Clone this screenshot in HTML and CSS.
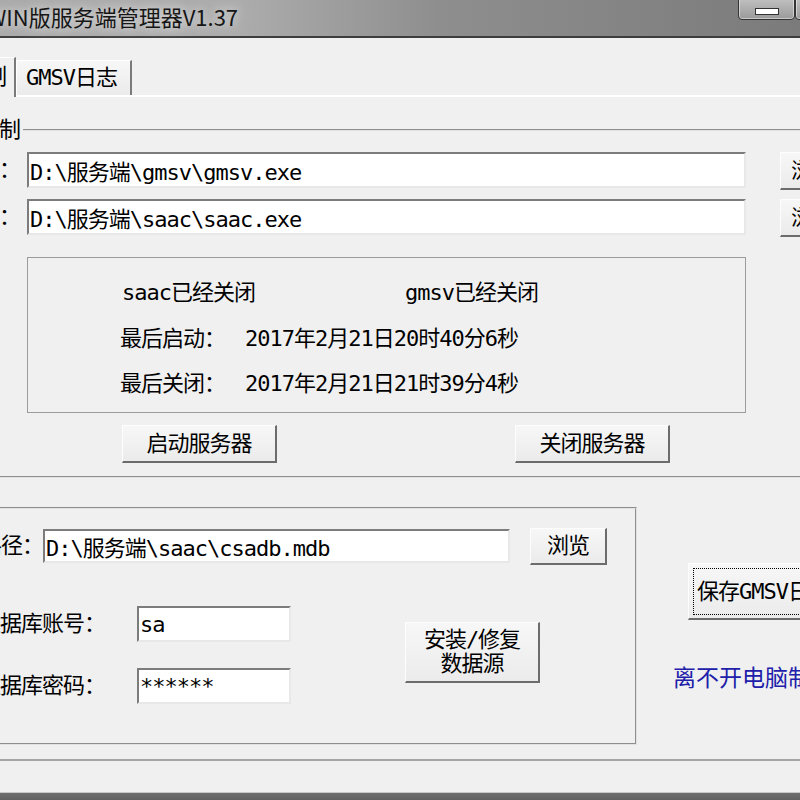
FILE: index.html
```html
<!DOCTYPE html>
<html lang="zh-CN">

<head>
    <meta charset="UTF-8">
    <title>WIN版服务端管理器V1.37</title>
    <link rel="stylesheet" href="styles.css">
</head>

<body>
    <div class="window">
        <div class="titlebar">
            <span class="title">WIN版服务端管理器V1.37</span>
            <div class="controls">
                <span class="ctl min"><i></i></span>
                <span class="ctl max"></span>
            </div>
        </div>

        <div class="client">
            <div class="tabs">
                <div class="tab active">服务端控制</div>
                <div class="tab">GMSV日志</div>
            </div>

            <div class="panel">
                <fieldset class="group server">
                    <legend>服务端控制</legend>
                    <div class="paths">
                        <label>GMSV路径：</label>
                        <input type="text" value="D:\服务端\gmsv\gmsv.exe" readonly>
                        <button>浏览</button>
                        <label>SAAC路径：</label>
                        <input type="text" value="D:\服务端\saac\saac.exe" readonly>
                        <button>浏览</button>
                    </div>

                    <div class="status">
                        <div class="status-row"><span class="col">saac已经关闭</span><span>gmsv已经关闭</span></div>
                        <div class="status-row"><span class="key">最后启动：</span><span>2017年2月21日20时40分6秒</span></div>
                        <div class="status-row"><span class="key">最后关闭：</span><span>2017年2月21日21时39分4秒</span></div>
                    </div>

                    <div class="actions">
                        <button>启动服务器</button>
                        <button>关闭服务器</button>
                    </div>
                </fieldset>

                <div class="lower">
                    <fieldset class="group db">
                        <legend>数据库</legend>
                        <div class="db-path">
                            <label>数据库路径：</label>
                            <input type="text" value="D:\服务端\saac\csadb.mdb" readonly>
                            <button>浏览</button>
                        </div>
                        <div class="db-auth">
                            <div class="creds">
                                <label>数据库账号：</label>
                                <input type="text" value="sa">
                                <label>数据库密码：</label>
                                <input type="text" value="******">
                            </div>
                            <button class="install">安装/修复<br>数据源</button>
                        </div>
                    </fieldset>

                    <div class="side">
                        <button class="save"><span class="focus">保存GMSV日志</span></button>
                        <p class="credit">离不开电脑制作</p>
                    </div>
                </div>
            </div>
            <div class="footer"></div>
        </div>
        <div class="frame"></div>
    </div>
</body>

</html>
```

FILE: styles.css
```css
/* General */
* {
    box-sizing: border-box;
}

body {
    margin: 0;
    width: 800px;
    height: 800px;
    overflow: hidden;
    background-color: #f0f0f0;
    font: 22px/26px "DejaVu Sans Mono", "Noto Sans CJK SC", monospace;
    letter-spacing: -1px;
    color: #000;
}

.window {
    width: 1100px;
    margin-left: -200px;
}

/* Title bar */
.titlebar {
    display: flex;
    height: 38px;
    padding: 0 60px 0 187px;
    background: linear-gradient(to right, #a6a6a6 0, #acacac 440px, #8e8e8e 640px, #7b7b7b 1000px);
    border-bottom: 2px solid #3d3d3d;
}

.title {
    font-family: "Noto Sans CJK SC", sans-serif;
    font-size: 22px;
    line-height: 33px;
    letter-spacing: 0;
    color: #161616;
    text-shadow: 0 0 8px #dedede, 0 0 16px #d4d4d4;
}

.controls {
    display: flex;
    margin-left: auto;
    margin-top: -3px;
    align-self: flex-start;
}

.ctl {
    display: flex;
    align-items: center;
    justify-content: center;
    height: 23px;
    border: 1px solid #353535;
    border-radius: 0 0 4px 4px;
    background: linear-gradient(#c2c2c2, #9a9a9a);
    box-shadow: inset 0 0 0 1px rgba(255, 255, 255, 0.45);
}

.ctl.min {
    width: 57px;
}

.ctl.max {
    width: 45px;
}

.ctl.min i {
    width: 24px;
    height: 7px;
    margin-top: 5px;
    background-color: #fff;
    border: 1px solid #333;
}

/* Client area and tabs */
.client {
    background-color: #f0f0f0;
    padding-top: 19px;
}

.tabs {
    display: flex;
    align-items: flex-end;
    height: 38px;
    padding-left: 90px;
}

.tab {
    width: 116px;
    height: 35px;
    padding-left: 9px;
    line-height: 33px;
    border-top: 1px solid #fff;
    border-left: 1px solid #fff;
    border-right: 2px solid #7a7a7a;
    background: linear-gradient(#f7f7f7, #ebebeb);
}

.tab.active {
    position: relative;
    z-index: 1;
    width: 126px;
    height: 40px;
    margin-bottom: -2px;
    padding: 0 8px 0 0;
    text-align: right;
    line-height: 38px;
    background: #f0f0f0;
}

.panel {
    margin-left: 84px;
    padding: 0 0 14px 4px;
    border-top: 2px solid #fff;
    border-left: 2px solid #fff;
    border-bottom: 2px solid #a6a6a6;
}

/* Group boxes */
.group {
    margin: 20px 0 0;
    padding: 9px 0 13px;
    border: 2px groove #e2e2e2;
    min-width: 0;
    width: 1000px;
}

.group legend {
    margin-left: 20px;
    padding: 0 3px;
    line-height: 26px;
}

label {
    text-align: right;
    white-space: nowrap;
    line-height: 36px;
}

input {
    height: 36px;
    width: 100%;
    padding: 0 1px;
    font: inherit;
    letter-spacing: inherit;
    color: #000;
    background-color: #fff;
    border: 2px solid;
    border-color: #7c7c7c #e8e8e8 #e8e8e8 #7c7c7c;
    outline: none;
}

button {
    padding: 0;
    font: inherit;
    letter-spacing: inherit;
    color: #000;
    background: linear-gradient(#f7f7f7, #ebebeb);
    border-style: solid;
    border-width: 1px 2px 2px 1px;
    border-color: #fdfdfd #6c6c6c #6c6c6c #fdfdfd;
    white-space: nowrap;
}

.paths {
    display: grid;
    grid-template-columns: 128px 719px 102px;
    column-gap: 7px;
    row-gap: 9px;
    align-items: start;
}

.paths button {
    width: 75px;
    height: 38px;
    margin-left: 27px;
    text-align: left;
    padding-left: 10px;
}

.status {
    width: 719px;
    height: 156px;
    margin: 20px 0 0 135px;
    padding: 12px 0 0 94px;
    border: 1px solid #9c9c9c;
    line-height: 45.5px;
}

.status-row {
    display: flex;
}

.status-row .col {
    width: 283px;
}

.status-row .key {
    width: 125px;
    margin-left: -2px;
}

.actions {
    display: flex;
    gap: 238px;
    margin: 12px 0 0 230px;
}

.actions button {
    width: 155px;
    height: 38px;
}

/* Lower part */
.lower {
    display: flex;
    align-items: flex-start;
    margin-top: 17px;
}

.group.db {
    width: 747px;
    margin-top: 0;
    padding: 7px 0 39px;
}

.db-path {
    display: grid;
    grid-template-columns: 151px 467px 97px;
    align-items: start;
}

.db-path input {
    height: 34px;
    margin-top: 1px;
}

.db-path button {
    width: 77px;
    height: 37px;
    margin-left: 20px;
}

.db-auth {
    display: flex;
    align-items: flex-start;
    margin-top: 41px;
}

.creds {
    display: grid;
    grid-template-columns: 213px 154px;
    column-gap: 32px;
    row-gap: 26px;
}

.install {
    width: 135px;
    height: 61px;
    margin: 16px 0 0 114px;
    line-height: 24px;
}

.side {
    margin-top: 68px;
}

.save {
    display: flex;
    width: 150px;
    height: 57px;
    margin-left: 51px;
    padding: 4px 3px 3px 4px;
}

.save .focus {
    flex: 1;
    padding-left: 3px;
    line-height: 46px;
    text-align: left;
    border: 1px dotted #000;
}

.credit {
    margin: 43px 0 0 36px;
    font-family: "Noto Sans CJK SC", sans-serif;
    font-size: 23px;
    line-height: 26px;
    letter-spacing: 0;
    color: #2020aa;
    white-space: nowrap;
}

.footer {
    height: 31px;
}

.frame {
    height: 12px;
    border-top: 1px solid #c8c8c8;
    background: linear-gradient(#6e6e6e, #5a5a5a);
}
```
